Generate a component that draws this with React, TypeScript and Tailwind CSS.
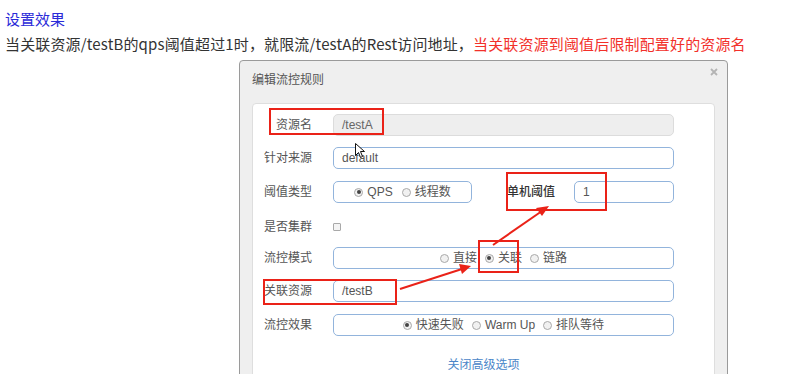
import React from "react";

function Radio({ checked, label }: { checked?: boolean; label: string }) {
  return (
    <span className="flex items-center gap-[4px]">
      <span className="flex h-[9px] w-[9px] items-center justify-center rounded-full border border-[#a9a9a9] bg-[#f1f1f1]">
        {checked ? <span className="h-[4px] w-[4px] rounded-full bg-[#444]" /> : null}
      </span>
      <span className="text-[12px] leading-[16px] text-[#555]">{label}</span>
    </span>
  );
}

function Label({ children }: { children: React.ReactNode }) {
  return (
    <div className="w-[59px] shrink-0 text-right text-[12px] leading-[16px] text-[#555]">{children}</div>
  );
}

export default function App() {
  return (
    <div className="relative h-[374px] w-[810px] overflow-hidden bg-white font-['Liberation_Sans','Noto_Sans_CJK_SC',sans-serif]">
      <div className="pl-[5px] pt-[6px] font-['Noto_Sans_CJK_SC',sans-serif] text-[15px] leading-[25px]">
        <div className="text-[#2a2ad8]">设置效果</div>
        <div className="whitespace-nowrap tracking-[0.15px] text-[#333]">
          当关联资源/testB的qps阈值超过1时，就限流/testA的Rest访问地址，
          <span className="text-[#f2302a]">当关联资源到阈值后限制配置好的资源名</span>
        </div>
      </div>

      <div className="ml-[239px] mt-[4px] w-[489px] rounded-t-[4px] border border-[#9a9a9a] bg-[#efefef] px-[12px]">
        <div className="flex h-[42px] justify-between">
          <div className="pt-[11px] text-[12px] leading-[16px] text-[#555]">编辑流控规则</div>
          <div className="mr-[-3px] pt-[7px]">
            <svg width="8" height="8" viewBox="0 0 8 8">
              <path d="M1 1 L7 7 M7 1 L1 7" stroke="#b4b4b4" strokeWidth="1.8" />
            </svg>
          </div>
        </div>

        <div className="h-[300px] rounded-[4px] border border-[#dedede] bg-white pr-[40px]">
          <div className="mt-[10px] flex h-[22px] items-center">
            <Label>资源名</Label>
            <div className="ml-[21px] flex h-[22px] flex-1 items-center rounded-[5px] border border-[#dcdcdc] bg-[#eeeeee] pl-[8px] text-[12px] text-[#666]">
              /testA
            </div>
          </div>

          <div className="mt-[11px] flex h-[22px] items-center">
            <Label>针对来源</Label>
            <div className="ml-[21px] flex h-[22px] flex-1 items-center rounded-[5px] border border-[#92b4dc] pl-[8px] text-[12px] text-[#555]">
              default
            </div>
          </div>

          <div className="mt-[12px] flex h-[22px] items-center">
            <Label>阈值类型</Label>
            <div className="ml-[21px] flex h-[22px] w-[139px] items-center justify-center gap-[9px] rounded-[5px] border border-[#92b4dc]">
              <Radio checked label="QPS" />
              <Radio label="线程数" />
            </div>
            <div className="ml-[35px] w-[48px] text-[12px] font-medium leading-[16px] text-[#333]">单机阈值</div>
            <div className="ml-[19px] flex h-[22px] flex-1 items-center rounded-[5px] border border-[#92b4dc] pl-[8px] text-[12px] text-[#555]">
              1
            </div>
          </div>

          <div className="mt-[13px] flex h-[22px] items-center">
            <Label>是否集群</Label>
            <div className="ml-[21px] h-[8px] w-[8px] rounded-[1px] border border-[#a9a9a9] bg-[#f4f4f4]" />
          </div>

          <div className="mt-[9px] flex h-[22px] items-center">
            <Label>流控模式</Label>
            <div className="ml-[21px] flex h-[22px] flex-1 items-center justify-center gap-[8px] rounded-[5px] border border-[#92b4dc]">
              <Radio label="直接" />
              <Radio checked label="关联" />
              <Radio label="链路" />
            </div>
          </div>

          <div className="mt-[11px] flex h-[22px] items-center">
            <Label>关联资源</Label>
            <div className="ml-[21px] flex h-[22px] flex-1 items-center rounded-[5px] border border-[#92b4dc] pl-[8px] text-[12px] text-[#555]">
              /testB
            </div>
          </div>

          <div className="mt-[12px] flex h-[22px] items-center">
            <Label>流控效果</Label>
            <div className="ml-[21px] flex h-[22px] flex-1 items-center justify-center gap-[8px] rounded-[5px] border border-[#92b4dc]">
              <Radio checked label="快速失败" />
              <Radio label="Warm Up" />
              <Radio label="排队等待" />
            </div>
          </div>

          <div className="mt-[21px] pl-[40px] text-center text-[12px] leading-[16px] text-[#4a86c8]">关闭高级选项</div>
        </div>
      </div>

      {/* annotations */}
      <div className="absolute left-[269px] top-[108px] h-[27px] w-[115px] border-2 border-[#ea2218]" />
      <div className="absolute left-[506px] top-[172px] h-[39px] w-[101px] border-2 border-[#ea2218]" />
      <div className="absolute left-[478px] top-[240px] h-[33px] w-[41px] border-2 border-[#ea2218]" />
      <div className="absolute left-[263px] top-[279px] h-[26px] w-[134px] border-2 border-[#ea2218]" />

      <svg className="absolute left-0 top-0" width="810" height="374" viewBox="0 0 810 374">
        <line x1="493" y1="245" x2="542" y2="211" stroke="#ea2218" strokeWidth="2" />
        <polygon points="549,206 536,208 542,216" fill="#ea2218" />
        <line x1="400" y1="289" x2="462" y2="269" stroke="#ea2218" strokeWidth="2" />
        <polygon points="471,266 459,264 462,274" fill="#ea2218" />
        <path d="M355.5 143.5 L355.5 155.5 L358.5 152.5 L360.5 157.5 L362.5 156.5 L360.5 151.5 L364.5 151.5 Z" fill="#fff" stroke="#111" strokeWidth="1" />
      </svg>
    </div>
  );
}
